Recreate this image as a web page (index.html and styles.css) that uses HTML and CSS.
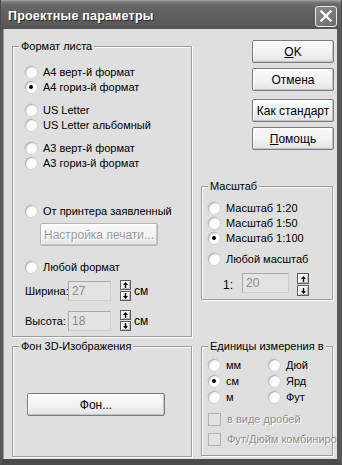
FILE: index.html
```html
<!DOCTYPE html>
<html lang="ru">
<head>
<meta charset="utf-8">
<title>Проектные параметры</title>
<link rel="stylesheet" href="styles.css">
</head>
<body>
<div class="window">
  <div class="titlebar">
    <span class="title">Проектные параметры</span>
    <span class="close"><svg width="12" height="12" viewBox="0 0 12 12"><path d="M1.5 1.5 L10.5 10.5 M10.5 1.5 L1.5 10.5" stroke="#fff" stroke-width="2.4" stroke-linecap="square"/></svg></span>
  </div>
  <div class="client">
    <div class="col-left">
      <fieldset class="group g-format">
        <legend>Формат листа</legend>
        <div class="inner">
          <div class="radio gap-a"><span class="rb"></span>А4 верт-й формат</div>
          <div class="radio"><span class="rb on"></span>А4 гориз-й формат</div>
          <div class="radio gap-b"><span class="rb"></span>US Letter</div>
          <div class="radio"><span class="rb"></span>US Letter альбомный</div>
          <div class="radio gap-b"><span class="rb"></span>А3 верт-й формат</div>
          <div class="radio"><span class="rb"></span>А3 гориз-й формат</div>
          <div class="radio gap-c"><span class="rb"></span>От принтера заявленный</div>
          <div class="btn btn-disabled btn-print">Настройка печати...</div>
          <div class="radio gap-d"><span class="rb"></span>Любой формат</div>
          <div class="field-row fr-w">
            <span class="flabel">Ширина:</span>
            <span class="input">27</span>
            <span class="spin"><span class="sb"><svg width="5" height="6" viewBox="0 0 5 6"><path d="M2.5 0 L5 3 L3.2 3 L3.2 6 L1.8 6 L1.8 3 L0 3 Z" fill="#000"/></svg></span><span class="sb"><svg width="5" height="6" viewBox="0 0 5 6"><path d="M2.5 6 L5 3 L3.2 3 L3.2 0 L1.8 0 L1.8 3 L0 3 Z" fill="#000"/></svg></span></span>
            <span class="unit">см</span>
          </div>
          <div class="field-row fr-h">
            <span class="flabel">Высота:</span>
            <span class="input">18</span>
            <span class="spin"><span class="sb"><svg width="5" height="6" viewBox="0 0 5 6"><path d="M2.5 0 L5 3 L3.2 3 L3.2 6 L1.8 6 L1.8 3 L0 3 Z" fill="#000"/></svg></span><span class="sb"><svg width="5" height="6" viewBox="0 0 5 6"><path d="M2.5 6 L5 3 L3.2 3 L3.2 0 L1.8 0 L1.8 3 L0 3 Z" fill="#000"/></svg></span></span>
            <span class="unit">см</span>
          </div>
        </div>
      </fieldset>
      <fieldset class="group g-bg">
        <legend>Фон 3D-Изображения</legend>
        <div class="btn btn-bg">Фон...</div>
      </fieldset>
    </div>
    <div class="col-right">
      <div class="buttons">
        <div class="btn btn-side"><span><u>O</u>K</span></div>
        <div class="btn btn-side b-cancel">Отмена</div>
        <div class="btn btn-side b-std">Как стандарт</div>
        <div class="btn btn-side b-help"><span><u>П</u>омощь</span></div>
      </div>
      <fieldset class="group g-scale">
        <legend>Масштаб</legend>
        <div class="radio gap-s"><span class="rb"></span>Масштаб 1:20</div>
        <div class="radio"><span class="rb"></span>Масштаб 1:50</div>
        <div class="radio"><span class="rb on"></span>Масштаб 1:100</div>
        <div class="radio gap-s2"><span class="rb"></span>Любой масштаб</div>
        <div class="field-row fr-s">
          <span class="flabel-s">1:</span>
          <span class="input input-s">20</span>
          <span class="spin spin-s"><span class="sb"><svg width="5" height="6" viewBox="0 0 5 6"><path d="M2.5 0 L5 3 L3.2 3 L3.2 6 L1.8 6 L1.8 3 L0 3 Z" fill="#000"/></svg></span><span class="sb"><svg width="5" height="6" viewBox="0 0 5 6"><path d="M2.5 6 L5 3 L3.2 3 L3.2 0 L1.8 0 L1.8 3 L0 3 Z" fill="#000"/></svg></span></span>
        </div>
      </fieldset>
      <fieldset class="group g-units">
        <legend>Единицы измерения в</legend>
        <div class="units-grid">
          <div class="radio"><span class="rb"></span>мм</div>
          <div class="radio"><span class="rb"></span>Дюй</div>
          <div class="radio"><span class="rb on"></span>см</div>
          <div class="radio"><span class="rb"></span>Ярд</div>
          <div class="radio"><span class="rb"></span>м</div>
          <div class="radio"><span class="rb"></span>Фут</div>
        </div>
        <div class="check cb-1"><span class="cb"></span>в виде дробей</div>
        <div class="check cb-2"><span class="cb"></span>Фут/Дюйм комбинированно</div>
      </fieldset>
    </div>
  </div>
</div>
</body>
</html>
```

FILE: styles.css
```css
* { box-sizing: border-box; }

html, body {
  margin: 0;
  padding: 0;
  background: #dfdfdf;
}

body {
  font-family: "Liberation Sans", Arial, sans-serif;
  font-size: 11px;
  color: #000;
}

.window {
  width: 342px;
  height: 465px;
  display: flex;
  flex-direction: column;
  background: #dfdfdf;
}

.titlebar {
  height: 29px;
  flex: 0 0 29px;
  display: flex;
  align-items: center;
  justify-content: space-between;
  padding: 0 4px 0 7px;
  background: linear-gradient(#a8a8a8 0, #7a7a7a 2px, #676767 5px, #5f5f5f 14px, #5a5a5a 24px, #545454 100%);
  border-left: 1px solid #4a4a4a;
  border-right: 1px solid #4a4a4a;
}

.title {
  color: #fff;
  font-weight: bold;
  font-size: 12.5px;
  letter-spacing: 0.2px;
  text-shadow: 1px 1px 0 #2a2a2a;
  margin-top: 2px;
}

.close {
  width: 22px;
  height: 21px;
  margin-top: 3px;
  border: 1px solid #e8e8e8;
  border-radius: 3px;
  background: linear-gradient(135deg, #8c8c8c, #6a6a6a);
  display: flex;
  align-items: center;
  justify-content: center;
}

.client {
  flex: 1;
  display: flex;
  border-left: 3px solid #585858;
  border-right: 5px solid #585858;
  border-bottom: 6px solid #4c4c4c;
  box-shadow: inset 1px 0 0 #9a9a9a;
  overflow: hidden;
  padding: 11px 4px 0 9px;
  gap: 9px;
}

.col-left {
  width: 180px;
  flex: 0 0 180px;
  display: flex;
  flex-direction: column;
}

.col-right {
  width: 132px;
  flex: 0 0 132px;
  display: flex;
  flex-direction: column;
}

.group {
  margin: 0;
  padding: 0 0 0 6px;
  min-width: 0;
  border: 1px solid #9c9c9c;
  box-shadow: 1px 1px 0 #fff, inset 1px 1px 0 #fff;
  white-space: nowrap;
}

.group legend {
  padding: 0 2px;
  line-height: 13px;
  height: 13px;
  background: #dfdfdf;
}

.g-format { height: 297px; }
.g-bg { height: 117px; margin-top: 3px; }
.g-scale { height: 120px; margin-top: 30px; }
.g-units { height: 116px; margin-top: 40px; }

.inner { padding-left: 6px; }

.radio {
  display: flex;
  align-items: center;
  height: 15px;
  gap: 6px;
}

.rb {
  width: 12px;
  height: 12px;
  flex: 0 0 12px;
  border-radius: 50%;
  background: radial-gradient(circle at 60% 60%, #ffffff 0, #fbfbfb 45%, #d6d6d6 100%);
  box-shadow: inset 1px 1px 0 #b4b4b4, 0 0 0 0.5px #c4c4c4;
  position: relative;
}

.rb.on::after {
  content: "";
  position: absolute;
  left: 4px;
  top: 4px;
  width: 4px;
  height: 4px;
  border-radius: 50%;
  background: #000;
}

.gap-a { margin-top: 11px; }
.gap-b { margin-top: 8px; }
.gap-c { margin-top: 33px; }
.gap-d { margin-top: 13px; }

.btn {
  display: flex;
  align-items: center;
  justify-content: center;
  height: 23px;
  border: 1px solid #7c7c7c;
  border-radius: 2px;
  background: linear-gradient(#fbfbfb, #f1f1f1 60%, #e2e2e2);
  box-shadow: inset -1px -1px 0 #c4c4c4, inset 1px 1px 0 #fff;
  font-size: 12px;
  color: #000;
}

.btn u { text-decoration: underline; text-underline-offset: 1px; }

.btn-disabled {
  color: #9a9a9a;
  border-color: #b4b4b4;
  text-shadow: 1px 1px 0 #fff;
}

.btn-print {
  width: 118px;
  margin-top: 5px;
  margin-left: 15px;
}

.btn-bg {
  width: 138px;
  margin-top: 40px;
  margin-left: 8px;
}

.buttons {
  display: flex;
  flex-direction: column;
  padding-left: 51px;
}

.btn-side { width: 82px; }
.b-cancel { margin-top: 5px; }
.b-std { margin-top: 8px; }
.b-help { margin-top: 5px; }

.field-row {
  display: flex;
  align-items: center;
  height: 21px;
}

.fr-w { margin-top: 6px; }
.fr-h { margin-top: 9px; }

.flabel {
  width: 43px;
  flex: 0 0 43px;
  font-size: 11px;
}

.input {
  width: 43px;
  height: 20px;
  border: 1px solid #a9a9a9;
  border-right-color: #cfcfcf;
  border-bottom-color: #cfcfcf;
  background: #e3e3e3;
  color: #8a8a8a;
  font-size: 12px;
  padding-left: 3px;
  display: flex;
  align-items: center;
}

.spin {
  display: flex;
  flex-direction: column;
  gap: 1px;
  margin-left: 9px;
}

.sb {
  width: 11px;
  height: 10px;
  border: 1px solid #5c5c5c;
  background: #f2f2f2;
  box-shadow: inset 1px 1px 0 #fff, inset -1px -1px 0 #b8b8b8;
  display: flex;
  align-items: center;
  justify-content: center;
}

.unit {
  margin-left: 3px;
  font-size: 12px;
}

.gap-s { margin-top: 7px; }
.gap-s2 { margin-top: 6px; }

.fr-s {
  height: 23px;
  margin-top: 7px;
}

.flabel-s {
  width: 19px;
  flex: 0 0 19px;
  margin-left: 15px;
  font-size: 12px;
}

.input-s { width: 47px; align-self: flex-start; }

.spin-s { margin-left: 8px; }
.spin-s .sb { width: 12px; height: 11px; }

.units-grid {
  display: grid;
  grid-template-columns: 60px 60px;
  grid-auto-rows: 16px;
  margin-top: 4px;
}

.units-grid .radio { height: 16px; }

.check {
  display: flex;
  align-items: center;
  height: 16px;
  gap: 6px;
  color: #8e8e8e;
  text-shadow: 1px 1px 0 #fff;
}

.cb {
  width: 13px;
  height: 13px;
  flex: 0 0 13px;
  border: 1px solid #b0b0b0;
  background: #e2e2e2;
}

.cb-1 { margin-top: 6px; }
.cb-2 { margin-top: 4px; }
```
